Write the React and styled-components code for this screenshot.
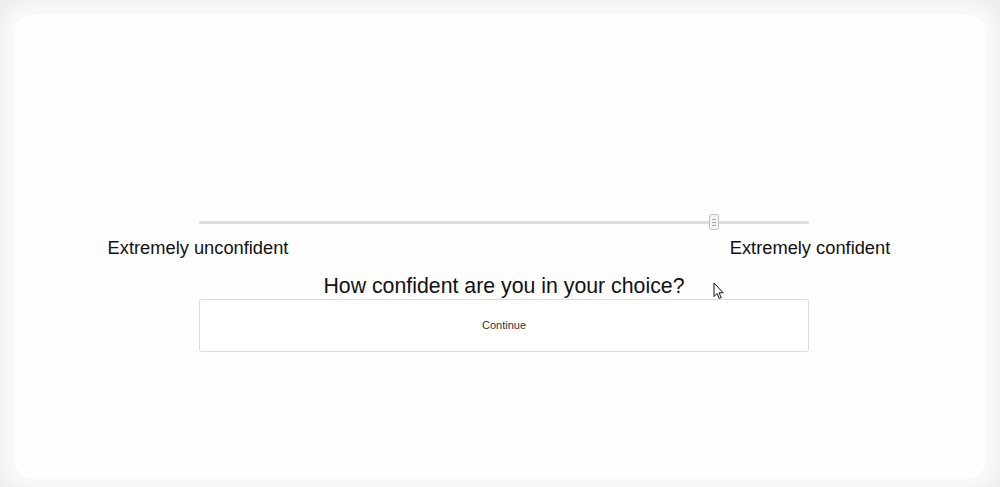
import React from "react";
import styled, { createGlobalStyle } from "styled-components";

const Global = createGlobalStyle`
  html, body { margin: 0; padding: 0; }
  body {
    background: #ececee;
    font-family: "Liberation Sans", Arial, sans-serif;
    color: #111;
  }
`;

const Frame = styled.div`
  height: 487px;
  box-sizing: border-box;
  padding: 14px 14px 8px 14px;
  display: flex;
`;

const Card = styled.main`
  position: relative;
  flex: 1;
  background: #fefefe;
  border-radius: 20px;
  box-shadow: 0 0 16px 12px #f9f9fa, 0 0 30px 14px #f4f4f6;
  display: flex;
  flex-direction: column;
  align-items: center;
  padding-top: 200px;
  padding-left: 8px;
`;

const Column = styled.section`
  width: 610px;
  display: flex;
  flex-direction: column;
  align-items: stretch;
`;

const Slider = styled.div`
  position: relative;
  height: 16px;
  display: flex;
  align-items: center;
`;

const Track = styled.div`
  flex: 1;
  height: 3px;
  background: #e3dadb;
  border-radius: 1px;
`;

const Thumb = styled.div`
  position: absolute;
  top: 0;
  width: 8px;
  height: 14px;
  background: #f3f3f3;
  border: 1px solid #c4c4c4;
  border-radius: 2px;
  display: flex;
  flex-direction: column;
  align-items: center;
  justify-content: center;
  gap: 2px;
`;

const Grip = styled.span`
  display: block;
  width: 4px;
  height: 1px;
  background: #a9a9a9;
`;

const LabelRow = styled.div`
  display: flex;
  justify-content: space-between;
  margin: 7px -1px 0 -1px;
`;

const EndLabel = styled.span`
  width: 0;
  display: flex;
  justify-content: center;
  white-space: nowrap;
  font-size: 18.3px;
  line-height: 21px;
  color: #111;
`;

const Question = styled.h2`
  margin: 16px 0 0 0;
  text-align: center;
  font-weight: normal;
  font-size: 21.3px;
  line-height: 25px;
  color: #111;
`;

const Button = styled.button`
  margin-top: 0;
  height: 53px;
  border: 1px solid #dcdcdc;
  border-radius: 3px;
  background: #fff;
  font-family: "Liberation Sans", Arial, sans-serif;
  font-size: 11px;
  line-height: 13px;
  padding: 0;
  color: #333;
  cursor: pointer;
`;

const Cursor = styled.svg`
  position: absolute;
  left: 699px;
  top: 268px;
  pointer-events: none;
`;

export default function App() {
  const value = 0.836;
  return (
    <>
      <Global />
      <Frame>
        <Card>
          <Column>
            <Slider>
              <Track />
              <Thumb style={{ left: `${value * 100}%` }}>
                <Grip />
                <Grip />
                <Grip />
              </Thumb>
            </Slider>
            <LabelRow>
              <EndLabel>Extremely unconfident</EndLabel>
              <EndLabel>Extremely confident</EndLabel>
            </LabelRow>
            <Question>How confident are you in your choice?</Question>
            <Button>Continue</Button>
          </Column>
          <Cursor width="12" height="18" viewBox="0 0 12 18">
            <path
              d="M1 1 L1 14.5 L4 11.5 L6.2 16.5 L8.2 15.6 L6 10.8 L10.2 10.8 Z"
              fill="#fff"
              stroke="#111"
              strokeWidth="1"
              strokeLinejoin="round"
            />
          </Cursor>
        </Card>
      </Frame>
    </>
  );
}
